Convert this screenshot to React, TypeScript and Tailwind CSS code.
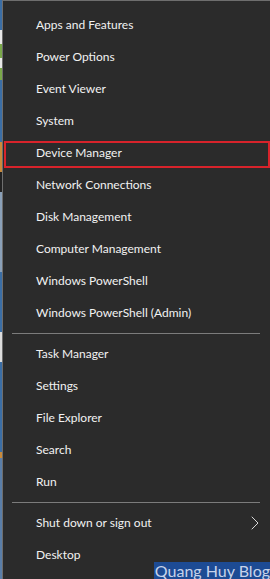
import { ChevronRight } from 'lucide-react';

const GROUP_A = [
  'Apps and Features',
  'Power Options',
  'Event Viewer',
  'System',
  'Device Manager',
  'Network Connections',
  'Disk Management',
  'Computer Management',
  'Windows PowerShell',
  'Windows PowerShell (Admin)',
];

const GROUP_B = ['Task Manager', 'Settings', 'File Explorer', 'Search', 'Run'];

// Slice of the desktop that peeks out on the left edge.
const STRIP = [
  'bg-[#3b6ea5] h-[30px]',
  'bg-[#e8e8e8] h-[14px]',
  'bg-[#7aa84a] h-[14px]',
  'bg-[#e8e8e8] h-[10px]',
  'bg-[#7aa84a] h-[12px]',
  'bg-[#3b6ea5] h-[62px]',
  'bg-[#c98a3a] h-[30px]',
  'bg-[#222] h-[20px]',
  'bg-[#8aa0b8] h-[80px]',
  'bg-[#3b6ea5] h-[60px]',
  'bg-[#ddd] h-[30px]',
  'bg-[#3b6ea5] h-[90px]',
  'bg-[#c98a3a] h-[6px]',
  'bg-[#5a7ea8] h-[121px]',
];

function Row({ label, highlight }: { label: string; highlight?: boolean }) {
  return (
    <div className="relative flex h-8 items-center pl-[33px] text-[12px] text-[#f2f2f2]">
      {highlight && (
        <span className="absolute top-[4px] bottom-[1px] left-[1px] right-0 border-2 border-[#d7232b]" />
      )}
      {label}
    </div>
  );
}

function Separator() {
  return (
    <div className="flex h-[9px] items-center pl-[9px] pr-[10px]">
      <div className="h-px w-full bg-[#7c7c7c]" />
    </div>
  );
}

export default function App() {
  return (
    <div
      className="relative flex h-[579px] w-[270px] overflow-hidden bg-[#2b2b2b]"
      style={{ fontFamily: 'Lato, "Noto Sans", sans-serif' }}
    >
      <div className="flex w-[2px] shrink-0 flex-col">
        {STRIP.map((s, i) => (
          <div key={i} className={s} />
        ))}
      </div>
      <div className="flex flex-1 flex-col border-t border-l border-[#6e6e6e] pt-[8px]">
        {GROUP_A.map((l) => (
          <Row key={l} label={l} highlight={l === 'Device Manager'} />
        ))}
        <Separator />
        {GROUP_B.map((l) => (
          <Row key={l} label={l} />
        ))}
        <Separator />
        <div className="flex h-8 items-center justify-between pl-[33px] pr-[3px] text-[12px] text-[#f2f2f2]">
          Shut down or sign out
          <ChevronRight size={24} strokeWidth={1} className="text-[#d8d8d8]" />
        </div>
        <Row label="Desktop" />
      </div>
      <div
        className="absolute right-0 bottom-0 flex h-[17px] items-center bg-[#1d4b94] pl-[1px] text-[16px] leading-none text-[#c7d3ea]"
        style={{ fontFamily: 'Lato, sans-serif' }}
      >
        Quang Huy Blog
      </div>
    </div>
  );
}
